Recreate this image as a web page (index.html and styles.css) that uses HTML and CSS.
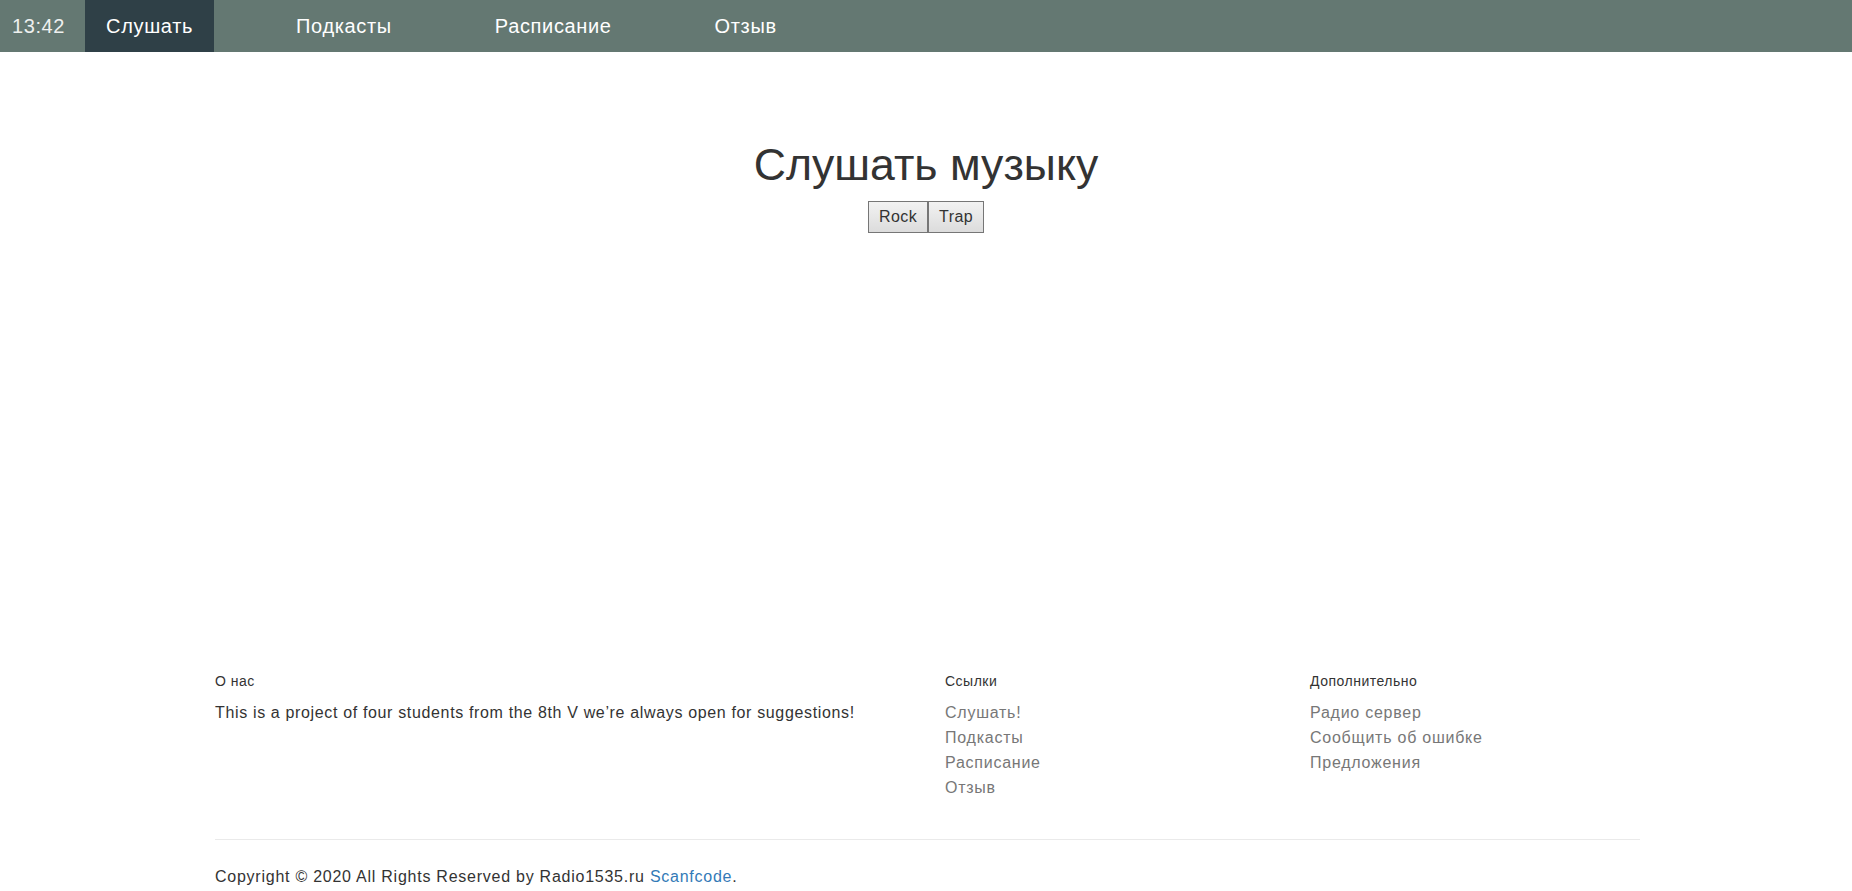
FILE: index.html
```html
<!DOCTYPE html>
<html lang="ru">
<head>
<meta charset="utf-8">
<title>Radio1535</title>
<link rel="stylesheet" href="styles.css">
</head>
<body>
<nav class="topnav">
  <span class="clock">13:42</span>
  <a class="nav-link active" href="#">Слушать</a>
  <a class="nav-link" href="#">Подкасты</a>
  <a class="nav-link" href="#">Расписание</a>
  <a class="nav-link" href="#">Отзыв</a>
</nav>
<main class="main">
  <h1 class="title">Слушать музыку</h1>
  <div class="genres">
    <button class="genre-btn">Rock</button><button class="genre-btn">Trap</button>
  </div>
</main>
<footer class="footer">
  <div class="footer-grid">
    <div class="footer-col">
      <h6 class="footer-title">О нас</h6>
      <p class="footer-text">This is a project of four students from the 8th V we’re always open for suggestions!</p>
    </div>
    <div class="footer-col">
      <h6 class="footer-title">Ссылки</h6>
      <ul class="footer-links">
        <li><a href="#">Слушать!</a></li>
        <li><a href="#">Подкасты</a></li>
        <li><a href="#">Расписание</a></li>
        <li><a href="#">Отзыв</a></li>
      </ul>
    </div>
    <div class="footer-col">
      <h6 class="footer-title">Дополнительно</h6>
      <ul class="footer-links">
        <li><a href="#">Радио сервер</a></li>
        <li><a href="#">Сообщить об ошибке</a></li>
        <li><a href="#">Предложения</a></li>
      </ul>
    </div>
  </div>
  <hr class="footer-rule">
  <p class="copyright">Copyright © 2020 All Rights Reserved by Radio1535.ru <a href="#">Scanfcode</a>.</p>
</footer>
</body>
</html>
```
FILE: styles.css
```css
* { box-sizing: border-box; }
html, body { margin: 0; padding: 0; }
body {
  font-family: "Liberation Sans", Arial, sans-serif;
  color: #333;
  background: #fff;
}
.topnav {
  display: flex;
  height: 52px;
  background: #647872;
  align-items: stretch;
}
.clock {
  padding: 0 20px 0 12px;
  line-height: 52px;
  font-size: 20px;
  letter-spacing: 0.6px;
  color: #eef0ef;
}
.nav-link {
  padding: 0 21px;
  margin-right: 61px;
  line-height: 52px;
  font-size: 20px;
  letter-spacing: 0.65px;
  color: #fff;
  text-decoration: none;
}
.nav-link.active {
  background: #2f4047;
}
.main {
  height: 620px;
  padding-top: 89px;
  text-align: center;
}
.title {
  margin: 0 0 12px;
  font-size: 44.6px;
  font-weight: 400;
  line-height: 48px;
  color: #333;
}
.genres {
  display: flex;
  justify-content: center;
}
.genre-btn {
  font-family: "Liberation Sans", Arial, sans-serif;
  font-size: 16px;
  line-height: 20px;
  letter-spacing: 0.4px;
  padding: 5px 10px;
  color: #333;
  border: 1px solid #767676;
  background: linear-gradient(#f2f2f2, #dcdcdc);
  margin: 0;
}
.footer {
  margin-left: 200px;
  width: 1460px;
}
.footer-grid {
  display: grid;
  grid-template-columns: 2fr 1fr 1fr;
}
.footer-col {
  padding: 0 15px;
}
.footer-title {
  margin: 0 0 10px;
  font-size: 14px;
  line-height: 18px;
  letter-spacing: 0.5px;
  font-weight: 400;
  color: #333;
}
.footer-text {
  margin: 0;
  font-size: 16px;
  line-height: 25px;
  letter-spacing: 0.65px;
  color: #333;
}
.footer-links {
  list-style: none;
  margin: 0;
  padding: 0;
}
.footer-links li {
  font-size: 16px;
  line-height: 25px;
  letter-spacing: 0.75px;
}
.footer-links a {
  color: #777;
  text-decoration: none;
}
.footer-rule {
  margin: 39px 20px 0 15px;
  border: 0;
  border-top: 1px solid #eaeaea;
}
.copyright {
  margin: 24px 15px 0;
  font-size: 16px;
  line-height: 25px;
  letter-spacing: 0.75px;
}
.copyright a {
  color: #337ab7;
  text-decoration: none;
}
```
